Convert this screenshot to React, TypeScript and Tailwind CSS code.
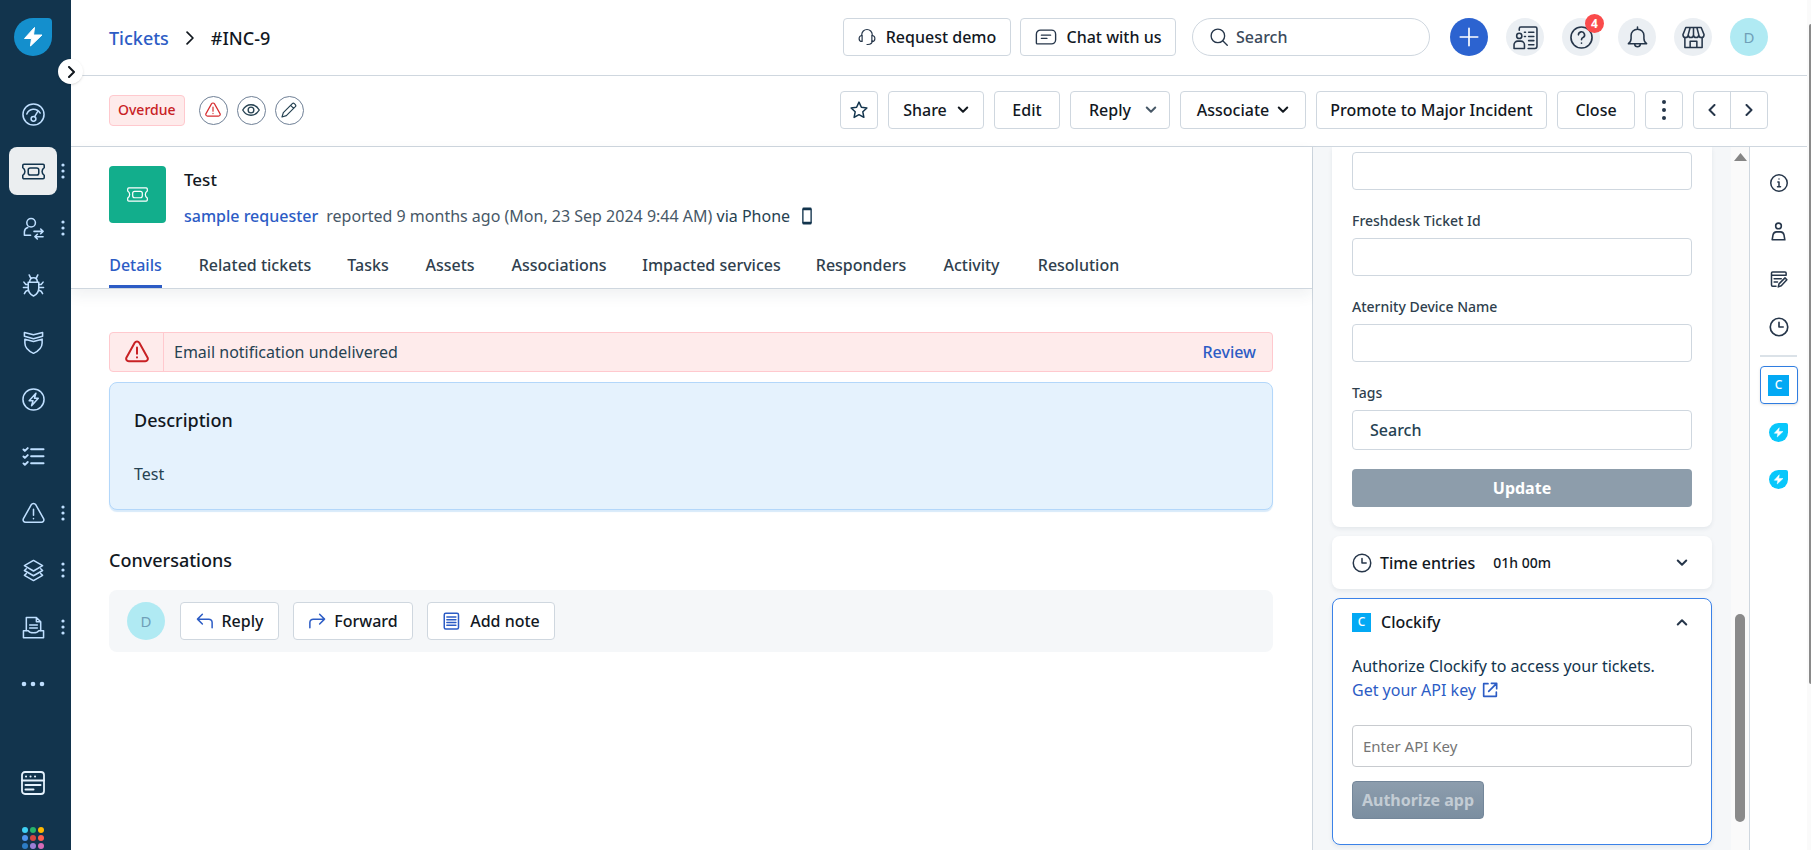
import { useState, type ReactNode } from 'react'
import clsx from 'clsx'

type IconProps = { className?: string; children?: ReactNode; width?: number }

function Icon({ className, children, width = 1.6 }: IconProps) {
  return (
    <svg
      viewBox="0 0 24 24"
      className={clsx('shrink-0', className)}
      fill="none"
      stroke="currentColor"
      strokeWidth={width}
      strokeLinecap="round"
      strokeLinejoin="round"
      aria-hidden="true"
    >
      {children}
    </svg>
  )
}

const ticketPath = (
  <>
    <path d="M2 4.500h20a1.200 1.200 0 0 1 1.200 1.200v2.300c-3 2-3 6 0 8v2.300a1.200 1.200 0 0 1-1.200 1.200H2a1.200 1.200 0 0 1-1.200-1.200V16c3-2 3-6 0-8V5.700A1.200 1.200 0 0 1 2 4.500z" />
    <rect x="6.500" y="8.300" width="11" height="7.400" rx="2.200" />
  </>
)

const warningPath = (
  <>
    <path d="M9.700 2.800c1-1.700 3.600-1.700 4.600 0l8.200 14.600c.9 1.700-.2 3.800-2.300 3.800H3.800c-2.100 0-3.200-2.100-2.300-3.800z" />
    <path d="M12 7.500v6.200M12 17.200v.2" />
  </>
)

const clockPath = (
  <>
    <circle cx="12" cy="12" r="10.500" />
    <path d="M12 6.500V12h5" />
  </>
)

function ChevronDown({ className }: { className?: string }) {
  return (
    <Icon className={clsx('size-3', className)} width={4}>
      <path d="M3.500 7l8.500 8.500L20.500 7" />
    </Icon>
  )
}

function Leaf({ className, from }: { className?: string; from: string }) {
  return (
    <svg viewBox="0 0 38 38" className={clsx('shrink-0', className)} aria-hidden="true">
      <path d="M19 0h15a4 4 0 0 1 4 4v15A19 19 0 1 1 19 0z" fill={from} />
      <path d="M20.500 9.500 10.500 20.500h7L16.500 28 28 17h-8.500z" fill="#fff" stroke="#fff" strokeLinejoin="round" />
    </svg>
  )
}

const navItems = [
  {
    label: 'Dashboard',
    icon: (
      <>
        <circle cx="12" cy="12" r="11" />
        <path d="M5 11.500c2.500-6 10-7 14-1M13.200 14.200 16 9.500" />
        <circle cx="12" cy="16.500" r="2.500" />
      </>
    ),
  },
  { label: 'Tickets', icon: ticketPath, active: true, more: true },
  {
    label: 'Requesters',
    icon: (
      <>
        <circle cx="9.500" cy="6" r="4.500" />
        <path d="M9 19H2.500v-3.500A5 5 0 0 1 6 11M12.500 15h9.500M19.500 12.500 22 15l-2.500 2.500M22 20.500h-8.500M16 18l-2.500 2.500L16 23" />
      </>
    ),
    more: true,
  },
  {
    label: 'Problems',
    icon: (
      <>
        <path d="M6.500 8.500h11v6c0 4-2.500 7-5.500 8.500-3-1.500-5.500-4.500-5.500-8.500zM8 8.500C8 5.500 9.500 4 12 4s4 1.500 4 4.500M9.200 4.500 7.500 1M14.800 4.500 16.500 1" />
        <path d="M6.500 11H4L2 8.500M6.500 14H1.500M6.500 17 4 18l-1.500 2.500M17.500 11H20l2-2.500M17.500 14h5M17.500 17l2.500 1 1.500 2.500" />
      </>
    ),
  },
  {
    label: 'Changes',
    icon: (
      <>
        <path d="M2.500 1.500 12 4l9.500-2.500v4L12 8 2.500 5.500z" />
        <path d="M3 8.500l9 2.500 9-2.500v4c0 4.500-4 8.500-9 10.800-5-2.300-9-6.300-9-10.800z" />
      </>
    ),
  },
  {
    label: 'Releases',
    icon: (
      <>
        <circle cx="12" cy="12" r="11" />
        <path d="M14.500 5.500 7.500 13.200h4L10 18.500l7-7.700h-4z" />
      </>
    ),
  },
  {
    label: 'Tasks',
    icon: (
      <>
        <path d="M9.500 4.500h13M9.500 11.800h13M9.500 19h13" strokeWidth="2" />
        <path d="M1.500 4.700l1.500 1.500 3-3M1.500 12l1.500 1.500 3-3M1.500 19.200l1.500 1.500 3-3" strokeWidth="2" />
      </>
    ),
  },
  { label: 'Alerts', icon: warningPath, more: true },
  {
    label: 'Assets',
    icon: (
      <path d="M12 1.500 21.500 7 12 12.500 2.500 7zM4.500 10.200 2.500 12l9.500 5.500L21.500 12l-2-1.800M4.500 15.200 2.500 17l9.500 5.500 9.500-5.500-2-1.800" />
    ),
    more: true,
  },
  {
    label: 'Contracts',
    icon: (
      <>
        <path d="M4.500 15V1.500H15L19.500 6v9M15 1.500V6h4.500M8 9.500h8M8 12.500h8" />
        <path d="M1.500 15.500h5.200c1.500 2.700 9 2.700 10.600 0h5.200v7.200h-21z" />
      </>
    ),
    more: true,
  },
]

const launcherDots = [
  'fill-[#3fd0f5]', 'fill-[#27b36b]', 'fill-[#ffb800]',
  'fill-[#4f94ef]', 'fill-[#d64541]', 'fill-[#ff5c4d]',
  'fill-[#2c7cc4]', 'fill-[#9b7fd6]', 'fill-[#d66bb8]',
]

function Sidebar() {
  return (
    <aside className="relative z-10 flex w-[71px] shrink-0 flex-col bg-[#12344d] text-[#bfdfff]">
      <a href="#home" aria-label="Home" className="ml-3.5 mt-[18px] block">
        <Leaf className="size-[38px]" from="#148fcd" />
      </a>
      <button
        type="button"
        aria-label="Expand navigation"
        className="absolute left-[58px] top-[59px] flex size-[25px] items-center justify-center rounded-full bg-white text-[#12181f] shadow-sm"
      >
        <Icon className="size-3" width={4}>
          <path d="M8 2l10 10L8 22" />
        </Icon>
      </button>

      <nav className="mt-[34px] flex flex-col gap-[9px]">
        {navItems.map((item) => (
          <div key={item.label} className="flex h-12 items-center pl-[9px]">
            <a
              href="#nav"
              aria-label={item.label}
              className={clsx(
                'flex size-12 items-center justify-center rounded-lg',
                item.active && 'bg-[#ebeef0] text-[#12344d]',
              )}
            >
              <Icon className="size-[23px]">{item.icon}</Icon>
            </a>
            {item.more && (
              <svg viewBox="0 0 4 16" className="ml-1 h-4 w-1 fill-current" aria-hidden="true">
                <circle cx="2" cy="2" r="1.600" />
                <circle cx="2" cy="8" r="1.600" />
                <circle cx="2" cy="14" r="1.600" />
              </svg>
            )}
          </div>
        ))}
        <a href="#more" aria-label="More" className="ml-[9px] flex size-12 items-center justify-center">
          <svg viewBox="0 0 24 6" className="h-1.5 w-6 fill-current" aria-hidden="true">
            <circle cx="3" cy="3" r="2.300" />
            <circle cx="12" cy="3" r="2.300" />
            <circle cx="21" cy="3" r="2.300" />
          </svg>
        </a>
      </nav>

      <a href="#workspace" aria-label="Workspaces" className="ml-[21px] mt-[63px] block text-[#e5f2fd]">
        <Icon className="size-6" width={1.800}>
          <rect x="1" y="1" width="22" height="22" rx="3" />
          <path d="M1 9.500h22M5 5.500h.1M9.500 5.500h.1M14 5.500h.1M4.500 14h15M4.500 18.500h8" strokeWidth="2" />
        </Icon>
      </a>
      <button type="button" aria-label="Switch product" className="ml-[22px] mt-8">
        <svg viewBox="0 0 22 22" className="size-[22px]" aria-hidden="true">
          {launcherDots.map((fill, i) => (
            <circle key={fill} cx={3 + (i % 3) * 8} cy={3 + Math.floor(i / 3) * 8} r="3" className={fill} />
          ))}
        </svg>
      </button>
    </aside>
  )
}

function OutlineButton({ className, children }: { className?: string; children: ReactNode }) {
  return (
    <button
      type="button"
      className={clsx(
        'flex h-[38px] shrink-0 items-center justify-center rounded border border-[#cfd7df] bg-white font-medium text-[#12181f]',
        className,
      )}
    >
      {children}
    </button>
  )
}

function RoundButton({ label, children }: { label: string; children: ReactNode }) {
  return (
    <button
      type="button"
      aria-label={label}
      className="relative flex size-[38px] items-center justify-center rounded-full bg-[#ebeff3] text-[#26364a]"
    >
      {children}
    </button>
  )
}

function Avatar() {
  return (
    <span className="flex size-[38px] shrink-0 items-center justify-center rounded-full bg-[#b0eaf3] text-[15px] text-[#6f9fb8]">
      D
    </span>
  )
}

function TopBar() {
  return (
    <header className="flex h-[76px] shrink-0 items-center border-b border-[#cfd7df] pb-px pl-[38px] pr-[39px]">
      <nav className="flex items-center pt-0.5 text-lg" aria-label="Breadcrumb">
        <a href="#tickets" className="font-medium text-[#2c5cc5]">Tickets</a>
        <Icon className="ml-3.5 size-3.5" width={3}>
          <path d="M7 2l10 10L7 22" />
        </Icon>
        <span className="ml-3.5 font-medium text-[#12181f]">#INC-9</span>
      </nav>

      <div className="ml-auto flex items-center">
        <OutlineButton className="w-[168px] gap-2.5">
          <Icon className="size-[18px] text-[#26364a]">
            <path d="M5 10V9a7 7 0 0 1 14 0v1M19 17c0 3-2 5-6 5h-1" />
            <path d="M5.500 10C3 10 1.500 12 1.500 14.200S3 18 5.500 18zM18.500 10c2.500 0 4 2 4 4.200S21 18 18.500 18z" />
          </Icon>
          Request demo
        </OutlineButton>
        <OutlineButton className="ml-[9px] w-[156px] gap-2.5">
          <Icon className="size-[22px] text-[#26364a]" width={1.5}>
            <path d="M6 4.500h12a4.500 4.500 0 0 1 4.500 4.500v6a4.500 4.500 0 0 1-4.500 4.500H2.500a1 1 0 0 1-1-1V9A4.500 4.500 0 0 1 6 4.500zM7 10h10M7 13.500h6" />
          </Icon>
          Chat with us
        </OutlineButton>
        <label className="ml-4 flex h-[38px] w-[238px] items-center rounded-full border border-[#cfd7df] pl-[17px]">
          <Icon className="size-[18px] text-[#26364a]" width={1.8}>
            <circle cx="10.500" cy="10.500" r="9" />
            <path d="M17 17l6 6" />
          </Icon>
          <input
            aria-label="Search"
            placeholder="Search"
            className="ml-2 w-40 bg-transparent font-medium outline-none placeholder:text-[#3b4a5b]"
          />
        </label>
        <div className="ml-5 flex items-center gap-[18px]">
          <button
            type="button"
            aria-label="New"
            className="flex size-[38px] items-center justify-center rounded-full bg-[#2c63d0] text-white"
          >
            <Icon className="size-5" width={2}>
              <path d="M12 1.500v21M1.500 12h21" />
            </Icon>
          </button>
          <RoundButton label="Contacts">
            <Icon className="size-[25px]" width={1.5}>
              <circle cx="6" cy="10.500" r="2.500" />
              <path d="M1 22.500v-3.500a3.500 3.500 0 0 1 3.500-3.500h3A3.500 3.500 0 0 1 11 19v3.500zM6 5V3.500A1.500 1.500 0 0 1 7.500 2h14A1.500 1.500 0 0 1 23 3.500v17a2 2 0 0 1-2 2h-6.500M11 7h1M15 7h5M11 11h1M15 11h5M15 15h5M15 19h5" />
            </Icon>
          </RoundButton>
          <RoundButton label="Help">
            <Icon className="size-[23px]" width={1.7}>
              <circle cx="12" cy="12" r="11" />
              <path d="M8.800 9.200a3.200 3.200 0 1 1 4.700 2.900c-1 .5-1.500 1.100-1.500 2.300M12 17.800v.2" />
            </Icon>
            <span className="absolute -right-1 -top-1 flex size-[19px] items-center justify-center rounded-full bg-[#fa4b4b] text-xs font-bold text-white">
              4
            </span>
          </RoundButton>
          <RoundButton label="Notifications">
            <Icon className="size-[23px]" width={1.6}>
              <path d="M12 1v2M2.500 18.500h19c-1.800-1.300-2.800-3-2.800-5.500V10a6.700 6.700 0 0 0-13.400 0v3c0 2.500-1 4.200-2.800 5.500zM9 19c.4 3.500 5.600 3.500 6 0" />
            </Icon>
          </RoundButton>
          <RoundButton label="Marketplace">
            <Icon className="size-[23px]" width={1.600}>
              <path d="M4 1.500h16L23 9c0 1.800-1.200 3-2.700 3s-2.800-1.200-2.800-3c0 1.800-1.200 3-2.700 3S12 10.800 12 9c0 1.800-1.300 3-2.800 3S6.500 10.800 6.500 9c0 1.800-1.300 3-2.800 3S1 10.800 1 9zM8.500 1.500 6.500 9M12 1.500V9M15.500 1.500l2 7.500M3 12.500v10h18v-10M8.500 22.500V16h7v6.500" />
            </Icon>
          </RoundButton>
          <Avatar />
        </div>
      </div>
    </header>
  )
}

const statusCircle =
  'flex size-[29px] items-center justify-center rounded-full border border-[#6f8096] text-[#264252]'

function ActionBar() {
  return (
    <div className="flex h-[71px] shrink-0 items-center border-b border-[#cfd7df] pb-0.5 pl-[38px] pr-[39px]">
      <span className="flex h-[31px] items-center rounded-sm border border-[#ffc9ce] bg-[#feebeb] px-2 text-sm font-medium text-[#c82124]">
        Overdue
      </span>
      <div className="ml-3.5 flex gap-[9px]">
        <button type="button" aria-label="Undelivered" className={statusCircle}>
          <Icon className="size-4 text-[#d72d30]" width={1.8}>{warningPath}</Icon>
        </button>
        <button type="button" aria-label="Watch" className={statusCircle}>
          <Icon className="size-[18px]" width={1.800}>
            <path d="M1 12c2.500-4.500 6.500-7 11-7s8.500 2.500 11 7c-2.500 4.500-6.500 7-11 7S3.500 16.500 1 12z" />
            <circle cx="12" cy="12" r="3.800" />
          </Icon>
        </button>
        <button type="button" aria-label="Edit status" className={statusCircle}>
          <Icon className="size-4" width={1.800}>
            <path d="M17 2.500a2.200 2.200 0 0 1 3 0l1.500 1.500a2.200 2.200 0 0 1 0 3L8 20.500l-6.500 2L3.500 16zM14.500 5l4.500 4.500" />
          </Icon>
        </button>
      </div>

      <div className="ml-auto flex gap-2.5">
        <OutlineButton className="w-[38px]">
          <Icon className="size-[18px] text-[#12344d]" width={2}>
            <path d="M12 1.500l3.200 6.900 7.300.9-5.400 5.100 1.400 7.400L12 18.200l-6.500 3.600 1.400-7.400L1.500 9.300l7.300-.9z" />
          </Icon>
        </OutlineButton>
        <OutlineButton className="w-24 gap-2.5">Share<ChevronDown /></OutlineButton>
        <OutlineButton className="w-[66px]">Edit</OutlineButton>
        <OutlineButton className="w-[100px] gap-3.5 pl-1.5">
          Reply<ChevronDown className="text-[#475867]" />
        </OutlineButton>
        <OutlineButton className="w-[126px] gap-2">Associate<ChevronDown /></OutlineButton>
        <OutlineButton className="w-[231px]">Promote to Major Incident</OutlineButton>
        <OutlineButton className="w-[78px]">Close</OutlineButton>
        <OutlineButton className="w-[38px]">
          <svg viewBox="0 0 4 20" className="h-5 w-1 fill-[#26364a]" aria-hidden="true">
            <circle cx="2" cy="2" r="2" />
            <circle cx="2" cy="10" r="2" />
            <circle cx="2" cy="18" r="2" />
          </svg>
        </OutlineButton>
        <div className="flex h-[38px] divide-x divide-[#cfd7df] rounded border border-[#cfd7df] text-[#26364a]">
          <button type="button" aria-label="Previous" className="flex w-[37px] items-center justify-center">
            <Icon className="size-3" width={4}><path d="M17 2L7 12l10 10" /></Icon>
          </button>
          <button type="button" aria-label="Next" className="flex w-9 items-center justify-center">
            <Icon className="size-3" width={4}><path d="M7 2l10 10L7 22" /></Icon>
          </button>
        </div>
      </div>
    </div>
  )
}

const tabs = [
  { name: 'Details', width: 'w-[53px]' },
  { name: 'Related tickets', width: 'w-[110px]' },
  { name: 'Tasks', width: 'w-10' },
  { name: 'Assets', width: 'w-12' },
  { name: 'Associations', width: 'w-[94px]' },
  { name: 'Impacted services', width: 'w-[135px]' },
  { name: 'Responders', width: 'w-[88px]' },
  { name: 'Activity', width: 'w-[57px]' },
  { name: 'Resolution', width: 'w-[81px]' },
]

function TicketMain() {
  const [tab, setTab] = useState('Details')

  return (
    <main className="flex min-w-0 flex-1 flex-col border-r border-[#cfd7df]">
      <div className="border-b border-[#cfd7df] pl-[38px] pt-[19px] shadow-[0_6px_14px_rgba(24,50,71,0.07)]">
        <div className="flex gap-[18px]">
          <div className="flex size-[57px] items-center justify-center rounded bg-[#12ae8c] text-white">
            <Icon className="size-[21px]" width={1.4}>{ticketPath}</Icon>
          </div>
          <div>
            <h1 className="mt-0.5 text-[17px] font-medium leading-6 text-[#12181f]">Test</h1>
            <p className="mt-3 flex items-center whitespace-pre leading-6 text-[#475867]">
              <a href="#requester" className="font-medium text-[#2c5cc5]">sample requester</a>
              <span className="ml-2">reported 9 months ago (Mon, 23 Sep 2024 9:44 AM) </span>
              <span className="text-[#264252]">via Phone</span>
              <Icon className="ml-2 size-[18px] text-[#12344d]" width={1.800}>
                <path d="M6.500 3.500v17M17.500 3.500v17" />
                <path d="M7.500 2.500h9M7.500 21.500h9" strokeWidth="3.500" />
              </Icon>
            </p>
          </div>
        </div>
        <div role="tablist" className="mt-3.5 flex gap-[38px]">
          {tabs.map((t) => (
            <button
              key={t.name}
              type="button"
              role="tab"
              aria-selected={tab === t.name}
              onClick={() => setTab(t.name)}
              className={clsx(
                'flex h-[46px] shrink-0 items-center justify-center whitespace-nowrap border-b-3 pt-0.5 font-medium',
                t.width,
                tab === t.name ? 'border-[#2c5cc5] text-[#2c5cc5]' : 'border-transparent text-[#2f3f4e]',
              )}
            >
              {t.name}
            </button>
          ))}
        </div>
      </div>

      <div className="pl-[38px] pr-[39px] pt-[43px] text-[#264252]">
        <div className="flex h-10 items-center rounded border border-[#ffc9ce] bg-[#feebeb]">
          <div className="flex h-full w-[54px] items-center justify-center border-r border-[#ffc9ce] text-[#c82124]">
            <Icon className="size-6" width={2}>{warningPath}</Icon>
          </div>
          <span className="ml-2.5">Email notification undelivered</span>
          <a href="#review" className="ml-auto mr-4 font-medium text-[#2c5cc5]">Review</a>
        </div>

        <section className="mt-2.5 h-32 rounded-lg border border-[#b3d7fa] bg-[#e5f2fd] px-6 pt-[25px] shadow-[0_2px_1px_#d8eafa]">
          <h2 className="text-lg font-medium leading-6 text-[#12181f]">Description</h2>
          <p className="mt-[30px] leading-6">Test</p>
        </section>

        <h2 className="mt-[38px] text-lg font-medium leading-6 text-[#12181f]">Conversations</h2>
        <div className="mt-[18px] flex h-[62px] items-center rounded-lg bg-[#f5f7f9] px-[18px]">
          <Avatar />
          <OutlineButton className="ml-[15px] w-[99px] gap-2">
            <Icon className="size-[18px] text-[#2c5cc5]" width={2}>
              <path d="M8.500 3 2 9.500 8.500 16M2 9.500h15a4.500 4.500 0 0 1 4.500 4.500v7" />
            </Icon>
            Reply
          </OutlineButton>
          <OutlineButton className="ml-3.5 w-[120px] gap-2">
            <Icon className="size-[18px] text-[#2c5cc5]" width={2}>
              <path d="M15.500 3 22 9.500 15.500 16M22 9.500H7A4.500 4.500 0 0 0 2.500 14v7" />
            </Icon>
            Forward
          </OutlineButton>
          <OutlineButton className="ml-3.5 w-32 gap-2.5">
            <Icon className="size-[18px] text-[#2c5cc5]" width={2}>
              <rect x="3" y="1.500" width="19" height="21" rx="2" />
              <path d="M6.500 6.500h12M6.500 10.200h12M6.500 13.900h12M6.500 17.600h12" />
            </Icon>
            Add note
          </OutlineButton>
        </div>
      </div>
    </main>
  )
}

const fieldInput =
  'block w-full rounded border border-[#cfd7df] bg-white px-[17px] text-base font-medium outline-none placeholder:text-[#264252]'

function Field({ label, placeholder }: { label: string; placeholder?: string }) {
  return (
    <label className="mt-[19px] block text-sm font-medium text-[#2f3f4e]">
      <span className="mb-[5px] block leading-6">{label}</span>
      <input className={clsx(fieldInput, placeholder ? 'h-10' : 'h-[38px]')} placeholder={placeholder} />
    </label>
  )
}

function ClockifyBadge({ className }: { className?: string }) {
  return (
    <span className={clsx('flex items-center justify-center bg-[#03a9f4] text-xs font-medium text-white', className)}>
      C
    </span>
  )
}

function PropertiesPanel() {
  return (
    <div className="flex w-[436px] shrink-0 bg-[#f5f7f9]">
      <div className="flex flex-1 flex-col gap-[9px] overflow-hidden px-[19px]">
        <form className="rounded-b-lg bg-white px-5 pb-5 pt-[5px] shadow-[0_2px_4px_rgba(24,50,71,0.08)]">
          <input aria-label="Custom field" className={clsx(fieldInput, 'h-[38px]')} />
          <Field label="Freshdesk Ticket Id" />
          <Field label="Aternity Device Name" />
          <Field label="Tags" placeholder="Search" />
          <button type="button" className="mt-[19px] h-[38px] w-full rounded-sm bg-[#8d9dab] font-bold text-white">
            Update
          </button>
        </form>

        <section className="flex h-[53px] shrink-0 items-center rounded-lg bg-white pl-5 pr-6 shadow-[0_2px_4px_rgba(24,50,71,0.08)]">
          <Icon className="size-5 text-[#26364a]" width={1.800}>{clockPath}</Icon>
          <h3 className="ml-2 font-medium text-[#12181f]">Time entries</h3>
          <span className="ml-[18px] text-sm font-medium text-[#12181f]">01h 00m</span>
          <button type="button" aria-label="Expand" className="ml-auto">
            <ChevronDown className="size-2.5 text-[#26364a]" />
          </button>
        </section>

        <section className="h-[247px] shrink-0 rounded-lg border border-[#3b82e8] bg-white px-[19px] pt-[11px] shadow-[0_2px_4px_rgba(24,50,71,0.08)]">
          <div className="flex items-center pr-1">
            <ClockifyBadge className="size-[19px]" />
            <h3 className="ml-2.5 font-medium leading-6 text-[#12181f]">Clockify</h3>
            <button type="button" aria-label="Collapse" className="ml-auto">
              <ChevronDown className="size-2.5 rotate-180 text-[#26364a]" />
            </button>
          </div>
          <p className="mt-5 leading-6 text-[#12344d]">Authorize Clockify to access your tickets.</p>
          <a href="#api-key" className="flex items-center gap-1.5 leading-6 text-[#2c5cc5]">
            Get your API key
            <Icon className="size-4" width={2.500}>
              <path d="M9 2.500H2.500v19h19V15M14 2h8v8M22 2 10 14" />
            </Icon>
          </a>
          <input
            aria-label="API key"
            placeholder="Enter API Key"
            className="mt-[23px] block h-[42px] w-full rounded border border-[#c8cbcf] px-2.5 text-[15px] outline-none placeholder:text-[#757575]"
          />
          <button
            type="button"
            disabled
            className="mt-3.5 h-[38px] w-[132px] rounded border border-[#74879a] bg-linear-to-b from-[#8d9dad] to-[#7b8ea0] font-bold text-[#c3ccd4]"
          >
            Authorize app
          </button>
        </section>
      </div>

      <div className="flex w-[18px] flex-col items-center bg-[#fafafa] pb-7 pt-1.5">
        <svg viewBox="0 0 13 8" className="h-2 w-[13px] fill-[#858585]" aria-hidden="true">
          <path d="M6.500 0 13 8H0z" />
        </svg>
        <div className="mt-auto h-52 w-2.5 rounded-full bg-[#8a8a8a]" />
      </div>
    </div>
  )
}

function AppRail() {
  return (
    <nav className="flex w-[58px] shrink-0 flex-col items-center border-l border-[#cfd7df] pt-3 text-[#26364a]">
      <a href="#info" aria-label="Info" className="flex h-12 items-center">
        <Icon className="size-[18px]" width={2}>
          <circle cx="12" cy="12" r="11" />
          <path d="M10.500 10.500H12V17M10 17h4M12 6.500v.2" />
        </Icon>
      </a>
      <a href="#person" aria-label="Requester" className="flex h-12 items-center">
        <Icon className="size-[19px]" width={2}>
          <circle cx="12" cy="5" r="3.600" />
          <path d="M4 22.500l1-6a5 5 0 0 1 4.500-4h5a5 5 0 0 1 4.500 4l1 6z" />
        </Icon>
      </a>
      <a href="#notes" aria-label="Notes" className="flex h-12 items-center">
        <Icon className="size-[18px]" width={2}>
          <path d="M8 21.500H3.500a1.500 1.500 0 0 1-1.500-1.500V4a1.500 1.500 0 0 1 1.500-1.500H20A1.500 1.500 0 0 1 21.500 4v3M2 7h19M5.500 11.500H15M5.500 16H10M20 10.500l2.500 2.500-7.500 8-4 1.500 1-4z" />
        </Icon>
      </a>
      <a href="#time" aria-label="Time entries" className="flex h-12 items-center">
        <Icon className="size-5" width={2}>{clockPath}</Icon>
      </a>
      <hr className="mt-1 w-[37px] border-t-2 border-[#dbe2e8]" />
      <a
        href="#clockify"
        aria-label="Clockify"
        className="mt-[9px] flex size-[38px] items-center justify-center rounded border border-[#2f7de1] shadow-sm"
      >
        <ClockifyBadge className="size-[21px]" />
      </a>
      <a href="#app-one" aria-label="App one" className="mt-[19px]">
        <Leaf className="size-[19px]" from="#08c7fb" />
      </a>
      <a href="#app-two" aria-label="App two" className="mt-7">
        <Leaf className="size-[19px]" from="#08c7fb" />
      </a>
    </nav>
  )
}

export default function App() {
  return (
    <div className="flex h-screen overflow-hidden bg-white font-['Noto_Sans',sans-serif] text-base text-[#12181f]">
      <Sidebar />
      <div className="flex min-w-0 flex-1 flex-col">
        <TopBar />
        <ActionBar />
        <div className="flex min-h-0 flex-1">
          <TicketMain />
          <PropertiesPanel />
          <AppRail />
        </div>
      </div>
      <div className="w-1 shrink-0 bg-[#fafafa] pl-0.5 pt-6">
        <div className="h-[660px] rounded-l bg-[#8a8a8a]" />
      </div>
    </div>
  )
}
